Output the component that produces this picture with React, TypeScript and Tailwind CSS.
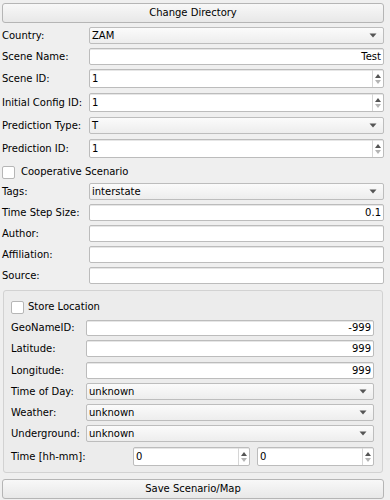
import React from "react";

const Arrow = () => (
  <svg width="8" height="5" viewBox="0 0 8 5" className="shrink-0">
    <path d="M0.5 0.5 L7.5 0.5 L4 4.5 Z" fill="#555" />
  </svg>
);

const SpinArrows = () => (
  <div className="flex h-full w-[11px] shrink-0 flex-col items-center justify-center gap-[2px] border-l border-[#d6d6d6]">
    <svg width="6" height="4" viewBox="0 0 6 4">
      <path d="M0 4 L6 4 L3 0 Z" fill="#555" />
    </svg>
    <svg width="6" height="4" viewBox="0 0 6 4">
      <path d="M0 0 L6 0 L3 4 Z" fill="#b4b4b4" />
    </svg>
  </div>
);

const LineEdit = ({ value = "", right = false }: { value?: string; right?: boolean }) => (
  <div
    className={`flex h-full min-w-0 flex-1 items-center rounded-[2px] border border-[#bcbcbc] bg-white px-[2px] shadow-[inset_0_1px_0_#e6e6e6] ${
      right ? "justify-end" : "justify-start"
    }`}
  >
    <span>{value}</span>
  </div>
);

const Combo = ({ value }: { value: string }) => (
  <div className="flex h-full min-w-0 flex-1 items-center justify-between rounded-[2px] border border-[#bdbdbd] bg-gradient-to-b from-[#fbfbfb] to-[#ededed] pl-[2px] pr-[6px]">
    <span>{value}</span>
    <Arrow />
  </div>
);

const Spin = ({ value, className = "flex-1" }: { value: string; className?: string }) => (
  <div
    className={`flex h-full min-w-0 items-center rounded-[2px] border border-[#bcbcbc] bg-white shadow-[inset_0_1px_0_#e6e6e6] ${className}`}
  >
    <span className="flex-1 pl-[2px]">{value}</span>
    <SpinArrows />
  </div>
);

const CheckBox = () => (
  <div className="h-[13px] w-[13px] shrink-0 rounded-[2px] border border-[#b6b6b6] bg-white" />
);

const Button = ({ label, className = "" }: { label: string; className?: string }) => (
  <div
    className={`flex h-[20px] items-center justify-center rounded-[3px] border border-[#b5b5b5] bg-gradient-to-b from-[#f8f8f8] to-[#e8e8e8] ${className}`}
  >
    {label}
  </div>
);

const Row = ({
  label,
  children,
  className,
  labelW = "w-[87px]",
}: {
  label: string;
  children: React.ReactNode;
  className: string;
  labelW?: string;
}) => (
  <div className={`flex items-center ${className}`}>
    <div className={`${labelW} shrink-0 whitespace-nowrap`}>{label}</div>
    {children}
  </div>
);

export default function App() {
  return (
    <div className="flex h-[500px] w-[390px] flex-col overflow-hidden bg-[#efefef] pl-[2px] pr-[6px] font-['DejaVu_Sans',sans-serif] text-[10px] leading-none text-black">
      <Button label="Change Directory" className="mt-[3px]" />

      <Row label="Country:" className="mt-[4px] h-[17px]">
        <Combo value="ZAM" />
      </Row>
      <Row label="Scene Name:" className="mt-[4px] h-[17px]">
        <LineEdit value="Test" right />
      </Row>
      <Row label="Scene ID:" className="mt-[4px] h-[19px]">
        <Spin value="1" />
      </Row>
      <Row label="Initial Config ID:" className="mt-[5px] h-[19px]">
        <Spin value="1" />
      </Row>
      <Row label="Prediction Type:" className="mt-[5px] h-[17px]">
        <Combo value="T" />
      </Row>
      <Row label="Prediction ID:" className="mt-[5px] h-[19px]">
        <Spin value="1" />
      </Row>

      <div className="mt-[4px] flex h-[20px] items-center gap-[6px]">
        <CheckBox />
        <span>Cooperative Scenario</span>
      </div>

      <Row label="Tags:" className="mt-[1px] h-[17px]">
        <Combo value="interstate" />
      </Row>
      <Row label="Time Step Size:" className="mt-[4px] h-[17px]">
        <LineEdit value="0.1" right />
      </Row>
      <Row label="Author:" className="mt-[4px] h-[17px]">
        <LineEdit />
      </Row>
      <Row label="Affiliation:" className="mt-[4px] h-[17px]">
        <LineEdit />
      </Row>
      <Row label="Source:" className="mt-[4px] h-[17px]">
        <LineEdit />
      </Row>

      <div className="mx-[1px] mt-[6px] flex h-[183px] flex-col rounded-[3px] border border-[#d2d2d2] bg-[#ececec] pl-[7px] pr-[8px]">
        <div className="mt-[8px] flex h-[16px] items-center gap-[4px]">
          <CheckBox />
          <span>Store Location</span>
        </div>
        <Row label="GeoNameID:" labelW="w-[75px]" className="mt-[5px] h-[16px]">
          <LineEdit value="-999" right />
        </Row>
        <Row label="Latitude:" labelW="w-[75px]" className="mt-[4px] h-[17px]">
          <LineEdit value="999" right />
        </Row>
        <Row label="Longitude:" labelW="w-[75px]" className="mt-[5px] h-[17px]">
          <LineEdit value="999" right />
        </Row>
        <Row label="Time of Day:" labelW="w-[75px]" className="mt-[4px] h-[17px]">
          <Combo value="unknown" />
        </Row>
        <Row label="Weather:" labelW="w-[75px]" className="mt-[4px] h-[17px]">
          <Combo value="unknown" />
        </Row>
        <Row label="Underground:" labelW="w-[75px]" className="mt-[4px] h-[17px]">
          <Combo value="unknown" />
        </Row>
        <div className="mt-[5px] flex h-[19px] items-center gap-[7px]">
          <div className="flex-1 whitespace-nowrap">Time [hh-mm]:</div>
          <Spin value="0" className="w-[117px]" />
          <Spin value="0" className="w-[117px]" />
        </div>
      </div>

      <Button label="Save Scenario/Map" className="mt-[6px]" />
    </div>
  );
}
